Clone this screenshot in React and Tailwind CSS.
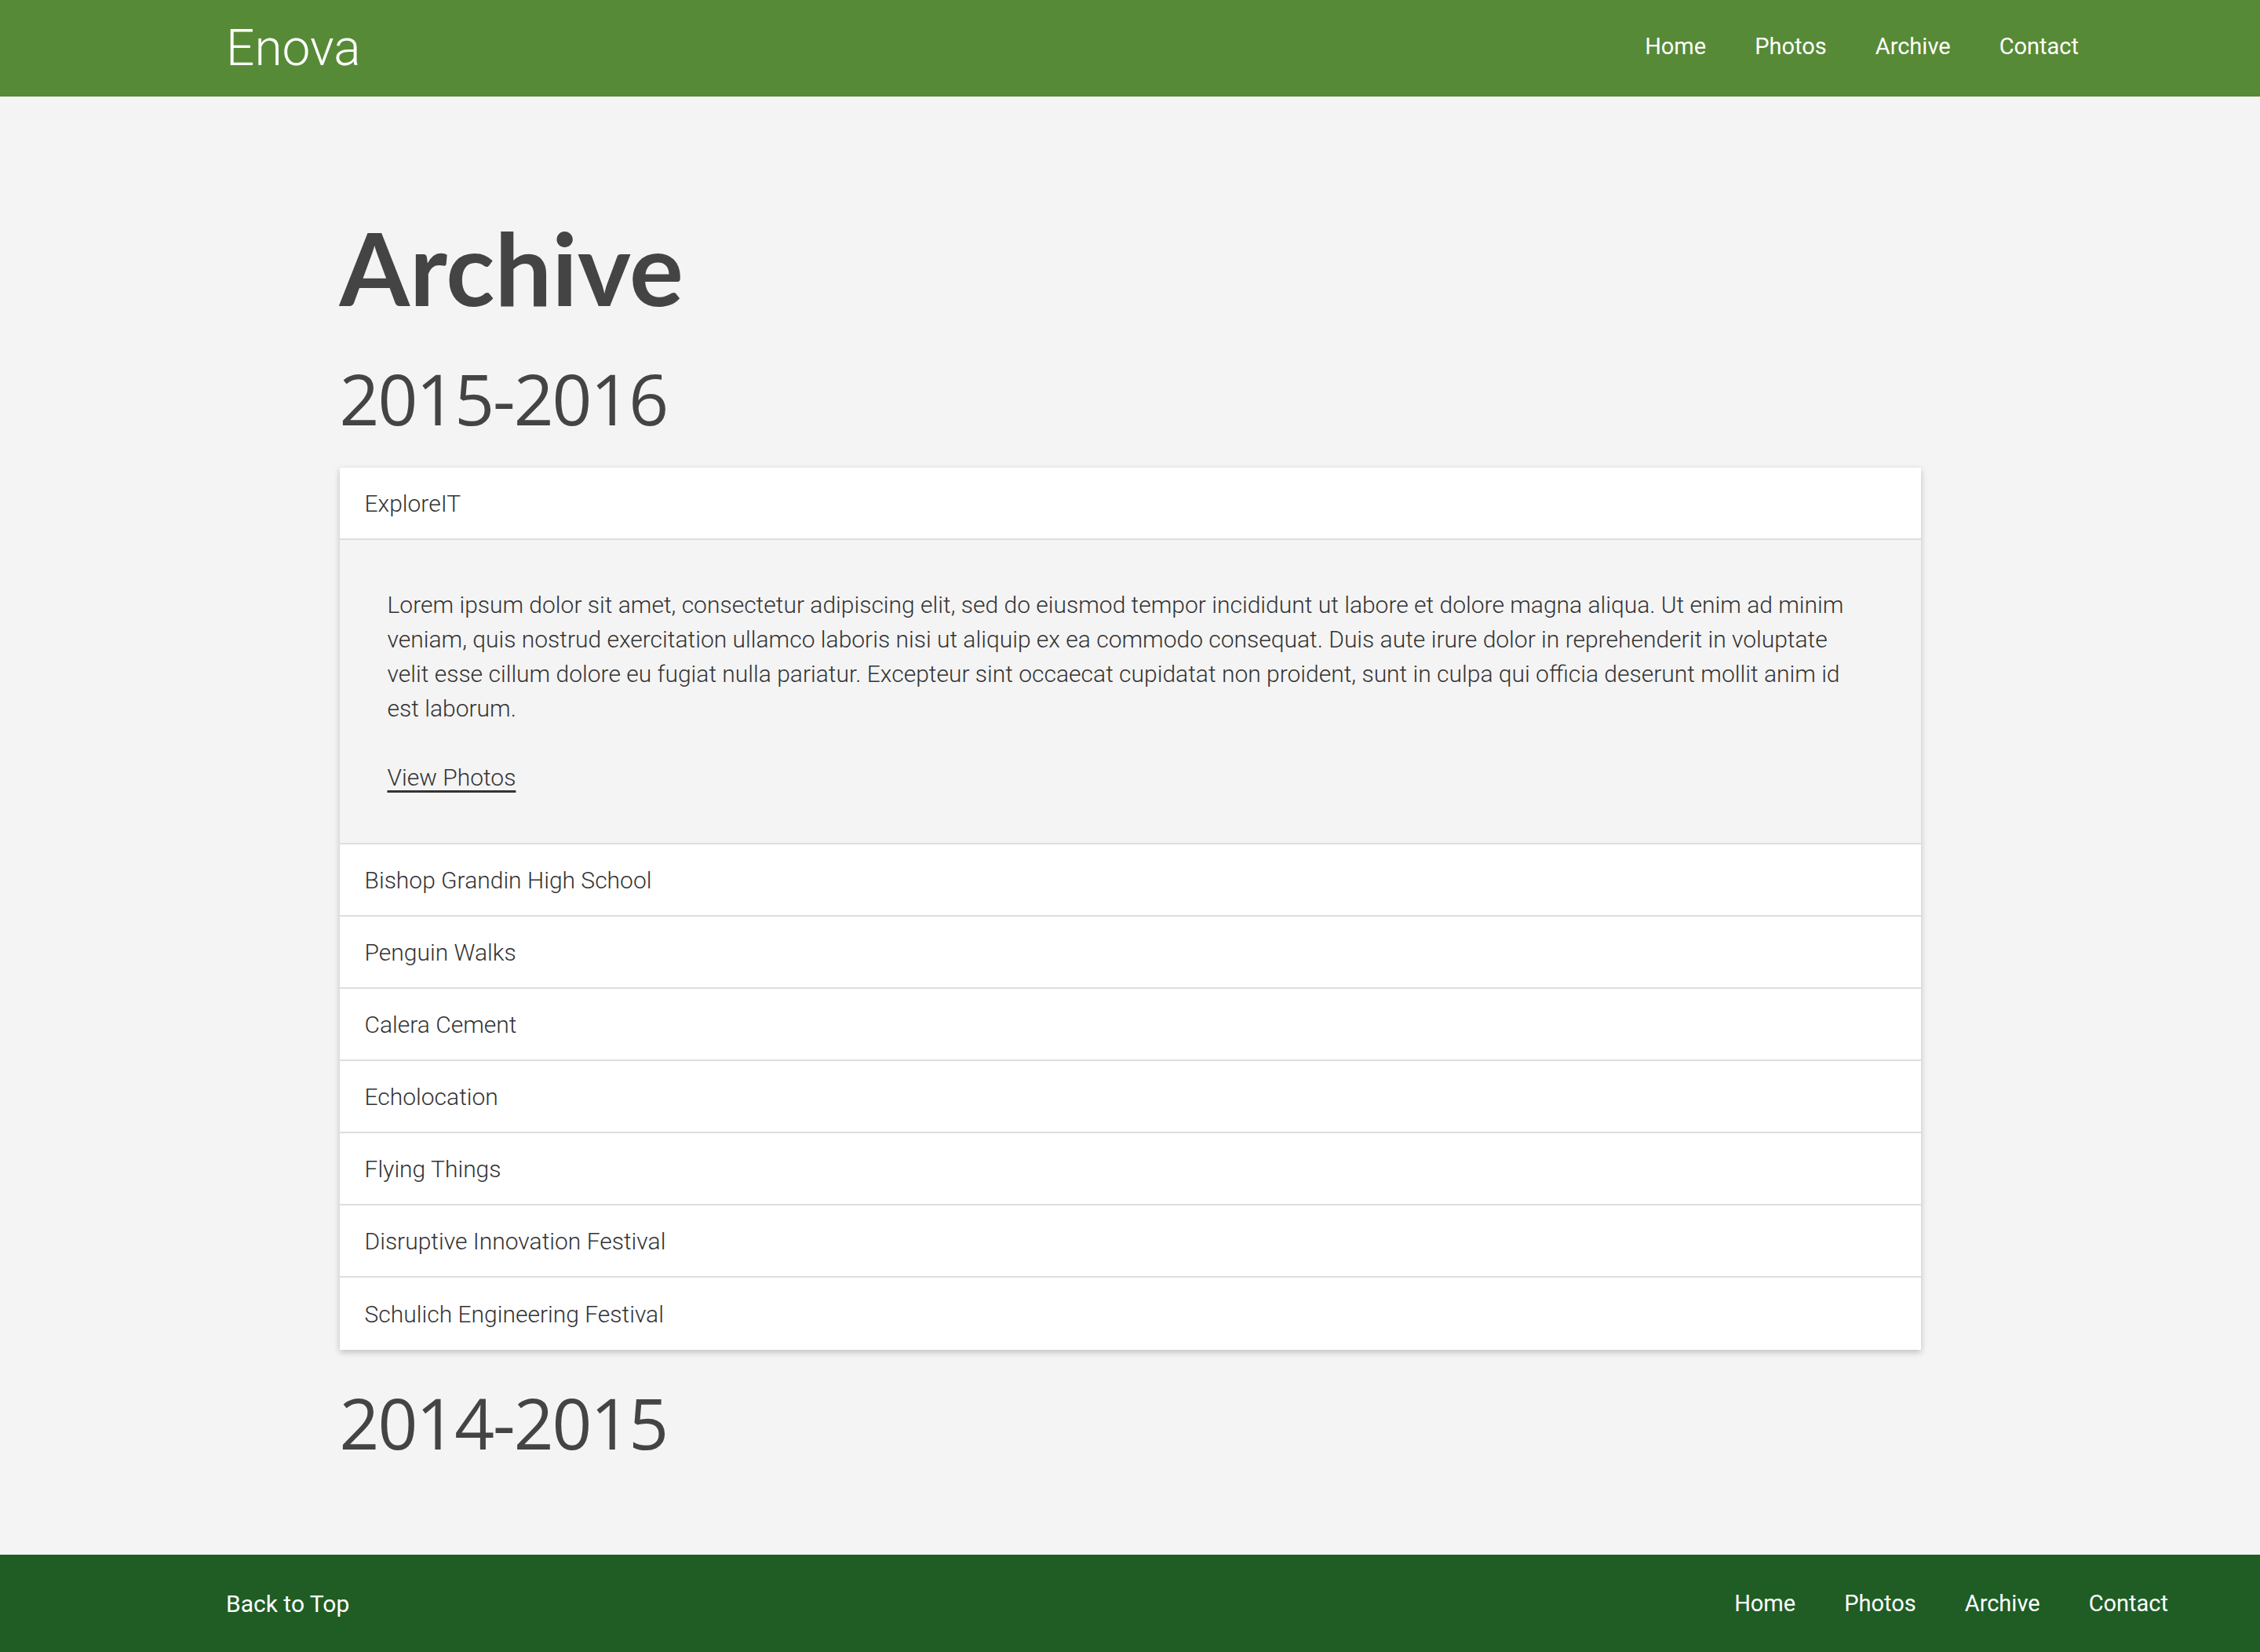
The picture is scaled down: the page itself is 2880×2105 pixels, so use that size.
import React from 'react';

const navLinks = ['Home', 'Photos', 'Archive', 'Contact'];

const events = [
  'Bishop Grandin High School',
  'Penguin Walks',
  'Calera Cement',
  'Echolocation',
  'Flying Things',
  'Disruptive Innovation Festival',
  'Schulich Engineering Festival',
];

const lorem =
  'Lorem ipsum dolor sit amet, consectetur adipiscing elit, sed do eiusmod tempor incididunt ut labore et dolore magna aliqua. Ut enim ad minim veniam, quis nostrud exercitation ullamco laboris nisi ut aliquip ex ea commodo consequat. Duis aute irure dolor in reprehenderit in voluptate velit esse cillum dolore eu fugiat nulla pariatur. Excepteur sint occaecat cupidatat non proident, sunt in culpa qui officia deserunt mollit anim id est laborum.';

const NavList = () => (
  <nav className="flex items-center">
    {navLinks.map((link) => (
      <a key={link} href="#" className="px-[31px] text-[29px] leading-none text-white">
        {link}
      </a>
    ))}
  </nav>
);

const App = () => {
  return (
    <div className="min-h-screen flex flex-col bg-[#f4f4f4] font-['Roboto','Liberation_Sans',sans-serif]">
      {/* Top bar */}
      <header className="h-[123px] shrink-0 bg-[#578a36] flex items-center justify-between pl-[288px] pr-[200px]">
        <a href="#" className="text-[64px] font-light leading-none text-white">Enova</a>
        <div className="-mt-[4px]">
          <NavList />
        </div>
      </header>

      <main className="flex-1 w-[2015px] mx-auto pb-[124px]">
        <h1 className="mt-[153px] text-[129px] leading-none font-bold text-[#444] font-['Lato','Open_Sans',sans-serif]">
          Archive
        </h1>
        <h2 className="mt-[58px] text-[89px] leading-none tracking-[-2px] text-[#444] font-['Open_Sans','Lato',sans-serif]">
          2015-2016
        </h2>

        <div className="mt-[44px] bg-white shadow-[0_3px_8px_rgba(0,0,0,0.22)]">
          <div className="h-[92px] flex items-center px-[32px] border-b-2 border-[#dedede] text-[30px] font-light text-[#333]">
            ExploreIT
          </div>
          <div className="bg-[#f4f4f4] border-b-2 border-[#dedede] p-[61px] text-[30px] leading-[44px] font-light text-[#333]">
            <p>{lorem}</p>
            <p className="mt-[44px]">
              <a href="#" className="underline underline-offset-[6px]">View Photos</a>
            </p>
          </div>
          {events.map((name, i) => (
            <div
              key={name}
              className={`h-[92px] flex items-center px-[32px] text-[30px] font-light text-[#333] ${
                i < events.length - 1 ? 'border-b-2 border-[#dedede]' : ''
              }`}
            >
              {name}
            </div>
          ))}
        </div>

        <h2 className="mt-[48px] text-[89px] leading-none tracking-[-2px] text-[#444] font-['Open_Sans','Lato',sans-serif]">
          2014-2015
        </h2>
      </main>

      <footer className="h-[125px] shrink-0 bg-[#1f5d25] flex items-center justify-between pl-[288px] pr-[86px]">
        <a href="#" className="text-[30px] leading-none text-white">Back to Top</a>
        <NavList />
      </footer>
    </div>
  );
};

export default App;
